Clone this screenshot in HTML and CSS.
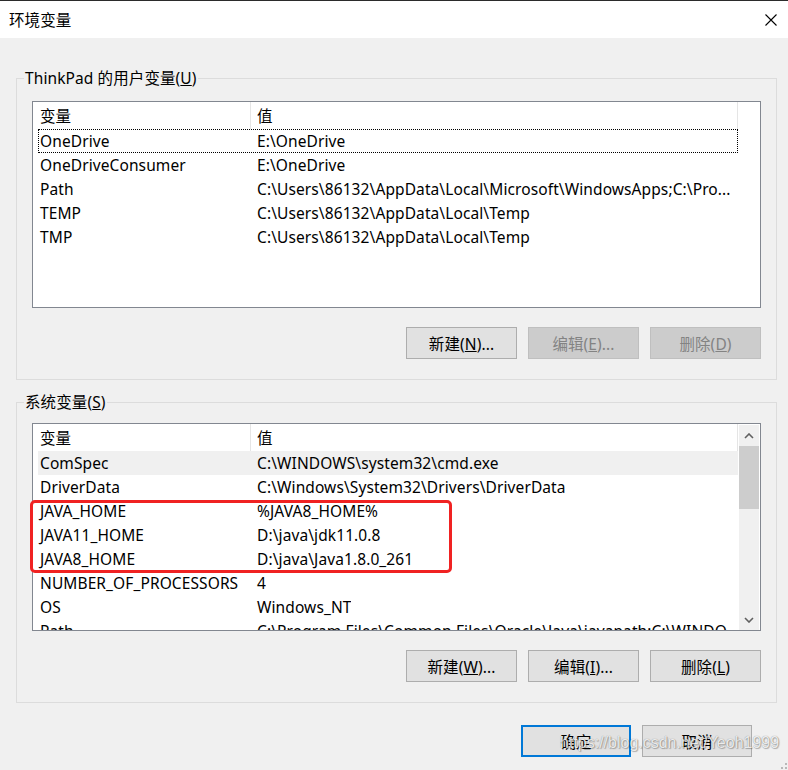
FILE: index.html
```html
<!DOCTYPE html>
<html lang="zh-CN">
  <head>
    <meta charset="UTF-8" />
    <title>环境变量</title>
    <link rel="stylesheet" href="styles.css">
  </head>
  <body>
    <div class="window">
      <!-- Title bar -->
      <div class="titlebar">
        <span class="title">环境变量</span>
        <svg class="close" width="12" height="12" viewBox="0 0 12 12">
          <path d="M0.5 0.5 L11.5 11.5 M11.5 0.5 L0.5 11.5" stroke="#000" stroke-width="1.1" fill="none" />
        </svg>
      </div>

      <div class="content">
        <!-- User variables -->
        <fieldset class="group">
          <legend>ThinkPad 的用户变量(<u>U</u>)</legend>
          <div class="list list-user">
            <div class="list-main">
              <div class="list-head">
                <span class="col-name">变量</span>
                <span class="col-value">值</span>
              </div>
              <div class="row focused"><span class="col-name">OneDrive</span><span class="col-value">E:\OneDrive</span></div>
              <div class="row"><span class="col-name">OneDriveConsumer</span><span class="col-value">E:\OneDrive</span></div>
              <div class="row"><span class="col-name">Path</span><span class="col-value">C:\Users\86132\AppData\Local\Microsoft\WindowsApps;C:\Pro...</span></div>
              <div class="row"><span class="col-name">TEMP</span><span class="col-value">C:\Users\86132\AppData\Local\Temp</span></div>
              <div class="row"><span class="col-name">TMP</span><span class="col-value">C:\Users\86132\AppData\Local\Temp</span></div>
            </div>
          </div>
          <div class="buttons">
            <button class="btn">新建(<u>N</u>)...</button>
            <button class="btn" disabled>编辑(<u>E</u>)...</button>
            <button class="btn" disabled>删除(<u>D</u>)</button>
          </div>
        </fieldset>

        <!-- System variables -->
        <fieldset class="group group-system">
          <legend>系统变量(<u>S</u>)</legend>
          <div class="list list-system">
            <div class="list-main">
              <div class="list-head">
                <span class="col-name">变量</span>
                <span class="col-value">值</span>
              </div>
              <div class="row hover"><span class="col-name">ComSpec</span><span class="col-value">C:\WINDOWS\system32\cmd.exe</span></div>
              <div class="row"><span class="col-name">DriverData</span><span class="col-value">C:\Windows\System32\Drivers\DriverData</span></div>
              <div class="row"><span class="col-name">JAVA_HOME</span><span class="col-value">%JAVA8_HOME%</span></div>
              <div class="row"><span class="col-name">JAVA11_HOME</span><span class="col-value">D:\java\jdk11.0.8</span></div>
              <div class="row"><span class="col-name">JAVA8_HOME</span><span class="col-value">D:\java\Java1.8.0_261</span></div>
              <div class="row"><span class="col-name">NUMBER_OF_PROCESSORS</span><span class="col-value">4</span></div>
              <div class="row"><span class="col-name">OS</span><span class="col-value">Windows_NT</span></div>
              <div class="row"><span class="col-name">Path</span><span class="col-value">C:\Program Files\Common Files\Oracle\Java\javapath;C:\WINDO...</span></div>
            </div>
            <div class="scrollbar">
              <div class="scroll-arrow">
                <svg width="10" height="6" viewBox="0 0 10 6"><path d="M1 5 L5 1 L9 5" stroke="#606060" stroke-width="1.6" fill="none" /></svg>
              </div>
              <div class="scroll-thumb"></div>
              <div class="scroll-track"></div>
              <div class="scroll-arrow">
                <svg width="10" height="6" viewBox="0 0 10 6"><path d="M1 1 L5 5 L9 1" stroke="#606060" stroke-width="1.6" fill="none" /></svg>
              </div>
            </div>
          </div>
          <div class="buttons">
            <button class="btn">新建(<u>W</u>)...</button>
            <button class="btn">编辑(<u>I</u>)...</button>
            <button class="btn">删除(<u>L</u>)</button>
          </div>
        </fieldset>

        <!-- Dialog buttons -->
        <div class="dialog-buttons">
          <button class="btn btn-default">确定</button>
          <button class="btn">取消</button>
        </div>
      </div>

      <!-- Annotation and watermark on top -->
      <div class="mark"></div>
      <div class="watermark">https://blog.csdn.net/Yeoh1999</div>
      <svg class="grip" width="8" height="8" viewBox="0 0 8 8">
        <rect x="5" y="1" width="2" height="2" fill="#b8b8b8" />
        <rect x="1" y="5" width="2" height="2" fill="#b8b8b8" />
        <rect x="5" y="5" width="2" height="2" fill="#b8b8b8" />
      </svg>
    </div>
  </body>
</html>
```

FILE: styles.css
```css
/* Window */
body {
  font-family: "Noto Sans", "Noto Sans CJK SC", sans-serif;
  font-size: 15.5px;
  letter-spacing: 0.1px;
  margin: 0;
  padding: 0;
  background: #f0f0f0;
  color: #000;
}
.window {
  position: relative;
  width: 788px;
  height: 770px;
  overflow: hidden;
  background: #f0f0f0;
}
.titlebar {
  display: flex;
  justify-content: space-between;
  align-items: center;
  height: 37px;
  border-top: 1px solid #2b2b2b;
  background: #fff;
  padding: 0 11px 0 9px;
}
.title {
  line-height: 20px;
}
.content {
  padding-top: 30px;
}
/* Group boxes */
.group {
  margin: 0 11px 0 16px;
  padding: 13px 15px 20px 15px;
  border: 1px solid #dcdcdc;
  min-width: 0;
}
.group legend {
  line-height: 20px;
  padding: 0 1px;
  margin-left: -8px;
}
.group-system {
  margin-top: 12px;
  padding-top: 11px;
}
/* List views */
.list {
  display: flex;
  box-sizing: border-box;
  height: 208px;
  border: 1px solid #828790;
  background: #fff;
  overflow: hidden;
}
.list-user {
  height: 207px;
}
.list-main {
  width: 705px;
  flex-shrink: 0;
}
.list-head {
  display: flex;
  height: 27px;
  line-height: 28px;
}
.list-head .col-name {
  box-sizing: border-box;
  width: 218px;
  padding-left: 7px;
  border-right: 1px solid #e5e5e5;
}
.list-head .col-value {
  box-sizing: border-box;
  width: 487px;
  padding-left: 6px;
  border-right: 1px solid #e5e5e5;
}
.row {
  display: flex;
  margin-left: 5px;
  height: 24px;
  line-height: 25px;
  white-space: nowrap;
}
.row .col-name {
  box-sizing: border-box;
  width: 212px;
  flex-shrink: 0;
  padding-left: 2px;
}
.row .col-value {
  padding-left: 7px;
  overflow: hidden;
}
.row.focused {
  outline: 1px dotted #000;
  outline-offset: -1px;
}
.row.hover {
  background: #f0f0f0;
}
/* Scrollbar */
.scrollbar {
  display: flex;
  flex-direction: column;
  width: 20px;
  margin: 1px 1px 0 1px;
  background: #f0f0f0;
}
.scroll-arrow {
  display: flex;
  justify-content: center;
  align-items: center;
  height: 21px;
}
.scroll-thumb {
  height: 63px;
  background: #cdcdcd;
}
.scroll-track {
  flex: 1;
}
/* Buttons */
.buttons {
  display: flex;
  justify-content: flex-end;
  gap: 11px;
  margin-top: 19px;
}
.btn {
  font-family: inherit;
  font-size: 15.5px;
  letter-spacing: 0.1px;
  width: 111px;
  height: 32px;
  padding: 0;
  background: #e1e1e1;
  border: 1px solid #adadad;
  color: #000;
}
.btn:disabled {
  background: #cccccc;
  border-color: #bfbfbf;
  color: #838383;
}
.dialog-buttons {
  display: flex;
  justify-content: flex-end;
  gap: 11px;
  margin: 22px 36px 0 0;
}
.dialog-buttons .btn {
  width: 110px;
}
.btn-default {
  border: 2px solid #0078d7;
}
/* Overlays */
.mark {
  position: absolute;
  left: 30px;
  top: 500px;
  width: 416px;
  height: 67px;
  border: 3px solid #f02222;
  border-radius: 5px;
}
.watermark {
  position: absolute;
  left: 560px;
  top: 734px;
  font-family: "Liberation Sans", Arial, sans-serif;
  font-size: 16px;
  letter-spacing: 0;
  color: rgba(255, 255, 255, 0.85);
  text-shadow: 0 0 1px rgba(0, 0, 0, 0.45), 1px 1px 1px rgba(0, 0, 0, 0.25);
}
.grip {
  position: absolute;
  right: 0;
  bottom: 0;
}
```
